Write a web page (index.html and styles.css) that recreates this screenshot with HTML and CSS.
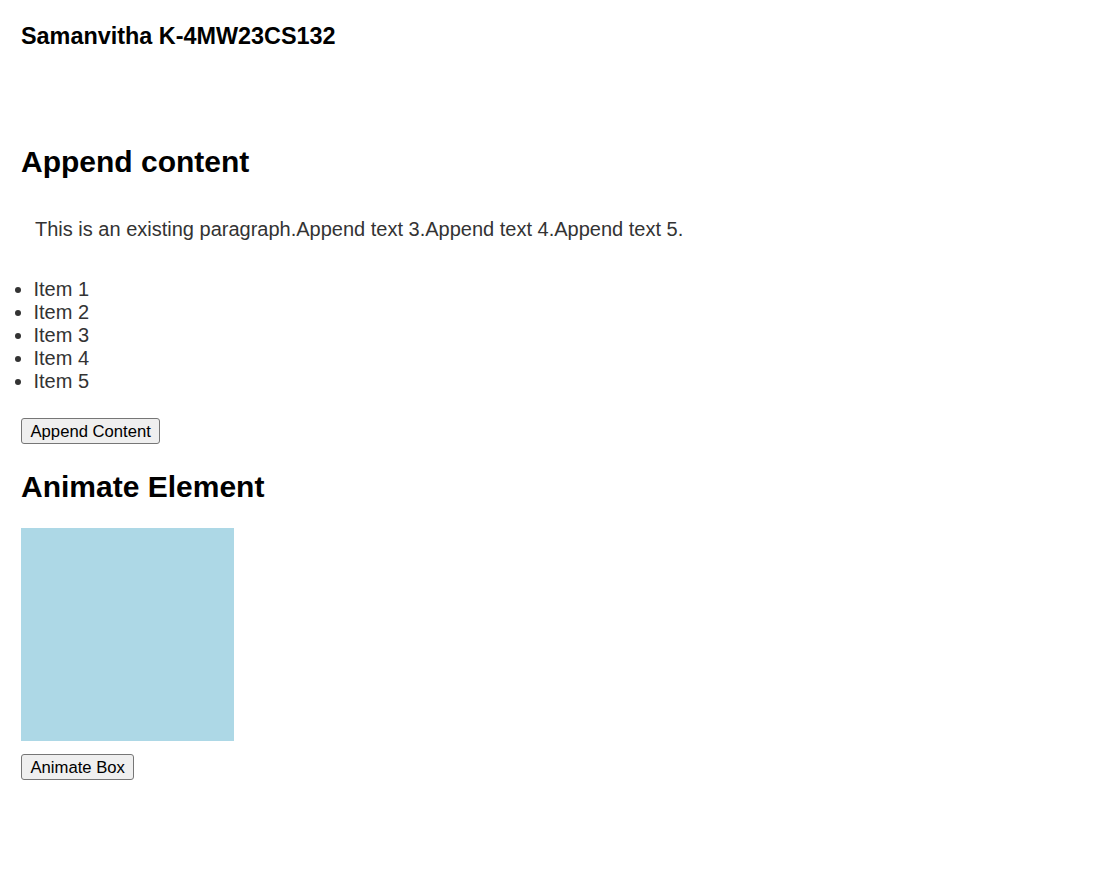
FILE: index.html
```html
<!DOCTYPE html>
<html lang="en">
<head>
<meta charset="utf-8">
<title>Append and Animate</title>
<link rel="stylesheet" href="styles.css">
</head>
<body>
<h3 class="title">Samanvitha K-4MW23CS132</h3>

<section class="block">
  <h2 class="block-title">Append content</h2>
  <p class="existing">This is an existing paragraph.Append text 3.Append text 4.Append text 5.</p>
  <ul class="items">
    <li>Item 1</li>
    <li>Item 2</li>
    <li>Item 3</li>
    <li>Item 4</li>
    <li>Item 5</li>
  </ul>
  <div class="actions actions-append"><button class="btn" type="button">Append Content</button></div>
</section>

<section class="block">
  <h2 class="block-title block-title-second">Animate Element</h2>
  <div class="box"></div>
  <div class="actions actions-animate"><button class="btn" type="button">Animate Box</button></div>
</section>
</body>
</html>
```

FILE: styles.css
```css
html, body {
  background: #ffffff;
}

body {
  margin: 0;
  padding: 0 21px;
  font-family: "Liberation Sans", Arial, sans-serif;
  color: #000;
}

.title {
  margin: 23px 0 94px;
  font-size: 23.4px;
  line-height: 27px;
  font-weight: bold;
}

.block-title {
  margin: 0 0 25px;
  font-size: 30px;
  line-height: 35px;
  font-weight: bold;
}

.block-title-second {
  margin-top: 25px;
  margin-bottom: 24px;
}

.existing {
  margin: 0 0 25px;
  padding: 14px 14px 12px;
  font-size: 20px;
  line-height: 23px;
  color: #333333;
}

.items {
  margin: 0;
  padding: 0 0 0 12.5px;
  font-size: 20px;
  line-height: 23px;
  color: #333333;
}

.actions {
  display: flex;
}

.actions-append {
  margin-top: 25px;
}

.actions-animate {
  margin-top: 13px;
}

.btn {
  box-sizing: border-box;
  height: 26px;
  padding: 1px 8.5px;
  font-family: "Liberation Sans", Arial, sans-serif;
  font-size: 16.67px;
  line-height: 19px;
  color: #000;
  background: #efefef;
  border: 1px solid #767676;
  border-radius: 3px;
}

.box {
  width: 213px;
  height: 213px;
  background: #add8e6;
}
```
